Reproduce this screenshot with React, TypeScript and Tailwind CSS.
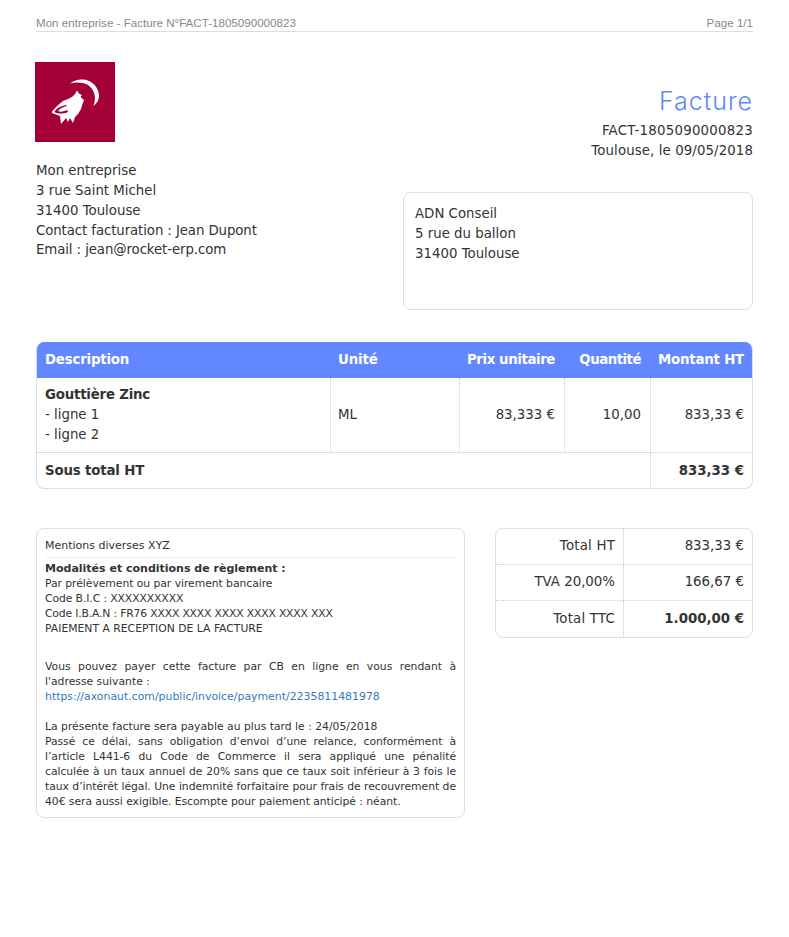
const dejavu = "font-['DejaVu_Sans',sans-serif]";

function Logo() {
  return (
    <div className="w-20 h-20 bg-[#a3003a] -ml-px">
      <svg width="80" height="80" viewBox="0 0 80 80">
        <path d="M35 21.5 C39 18 44 17 49 17.5 C58 19 64 26 64 34 C64 38 62 41 58.5 44 C62 35 59 27 53 23 C47 20 41 20 35 21.5 Z" fill="#fff" />
        <path d="M17 49.5 L22 44 L28 39 L33 37 L37 35 L40 32 L42 28.5 L44.5 32 L47 33 L45.5 35 L49 38 L47.5 42 L46 47 L43 52 L40 55 L38 61 L35 56 L33 60 L31 56 L26 62 L25 54 L17 51 Z" fill="#fff" />
        <path d="M19.5 50 C23 52 28 52 33 50 L32 48 C28 50 25 50 23 49 C25 46.5 28 45 32 44 L31 43 C26 44 21 46.5 19.5 50 Z" fill="#a3003a" />
      </svg>
    </div>
  );
}

const justifiedLine = "whitespace-nowrap [text-align-last:justify]";

export default function App() {
  return (
    <div className={`w-[789px] h-[937px] bg-white px-9 pt-4 text-[#333] text-[13.33px] leading-[19.85px] ${dejavu}`}>
      <div className="flex justify-between h-4 border-b border-[#ddd] font-['Liberation_Sans',sans-serif] text-[11.6px] leading-[14px] text-[#888]">
        <span>Mon entreprise - Facture N°FACT-1805090000823</span>
        <span>Page 1/1</span>
      </div>

      <div className="flex justify-between">
        <div className="pt-[30px]">
          <Logo />
          <div className="mt-[19px]">
            <div>Mon entreprise</div>
            <div>3 rue Saint Michel</div>
            <div>31400 Toulouse</div>
            <div className="tracking-[-0.1px]">Contact facturation : Jean Dupont</div>
            <div className="tracking-[-0.1px]">Email : jean@rocket-erp.com</div>
          </div>
        </div>
        <div className="w-[350px] pt-[53px]">
          <div className="text-right font-['Inter',sans-serif] font-light text-[25px] leading-[32px] tracking-[1px] text-[#6287ff]">Facture</div>
          <div className="text-right mt-[4px]">
            <div className="tracking-[0.25px]">FACT-1805090000823</div>
            <div className="tracking-[0.1px]">Toulouse, le 09/05/2018</div>
          </div>
          <div className="mt-[31px] h-[118px] border border-[#ddd] rounded-[8px] px-[11px] pt-[11px] leading-[20px]">
            <div>ADN Conseil</div>
            <div>5 rue du ballon</div>
            <div>31400 Toulouse</div>
          </div>
        </div>
      </div>

      <div className="mt-[32px] rounded-[8px] border border-[#ddd] border-t-0 overflow-hidden">
        <div className="grid grid-cols-[294px_129px_105px_86px_1fr] h-9 items-center bg-[#6287ff] text-white font-bold -mx-px">
          <div className="pl-[9px] tracking-[-0.2px]">Description</div>
          <div className="pl-2 tracking-[-0.1px]">Unité</div>
          <div className="text-right pr-[9px] tracking-[-0.4px]">Prix unitaire</div>
          <div className="text-right pr-[9px] tracking-[-0.5px]">Quantité</div>
          <div className="text-right pr-[9px] tracking-[-0.2px]">Montant HT</div>
        </div>
        <div className="grid grid-cols-[294px_129px_105px_86px_1fr] h-[74px] items-stretch">
          <div className="pl-2 flex flex-col justify-center border-r border-dotted border-[#ccc]">
            <div className="font-bold tracking-[-0.2px]">Gouttière Zinc</div>
            <div>- ligne 1</div>
            <div>- ligne 2</div>
          </div>
          <div className="pl-[7px] flex items-center border-r border-dotted border-[#ccc]">ML</div>
          <div className="pr-[9px] flex items-center justify-end border-r border-dotted border-[#ccc]">83,333 €</div>
          <div className="pr-[9px] flex items-center justify-end border-r border-dotted border-[#ccc]">10,00</div>
          <div className="pr-2 flex items-center justify-end">833,33 €</div>
        </div>
        <div className="grid grid-cols-[613px_1fr] h-[36px] items-stretch font-bold">
          <div className="pl-2 pt-px flex items-center border-t border-[#ddd] tracking-[-0.15px]">Sous total HT</div>
          <div className="pr-2 pt-px flex items-center justify-end border-t border-l border-dotted border-[#ccc]">833,33 €</div>
        </div>
      </div>

      <div className="mt-[39px] flex justify-between items-start">
        <div className="w-[429px] h-[290px] border border-[#ddd] rounded-[8px] px-2 pt-[9px] text-[10.8px] leading-[15.1px]">
          <div className="pb-[4px] border-b border-[#eee] text-[11px]">Mentions diverses XYZ</div>
          <div className="mt-[3px]">
            <div className="font-bold text-[11px]">Modalités et conditions de règlement :</div>
            <div className="tracking-[-0.05px]">Par prélèvement ou par virement bancaire</div>
            <div className="tracking-[-0.1px]">Code B.I.C : XXXXXXXXXX</div>
            <div className="tracking-[-0.17px]">Code I.B.A.N : FR76 XXXX XXXX XXXX XXXX XXXX XXX</div>
            <div>PAIEMENT A RECEPTION DE LA FACTURE</div>
            <div className={`mt-[23px] ${justifiedLine}`}>Vous pouvez payer cette facture par CB en ligne en vous rendant à</div>
            <div>l'adresse suivante :</div>
            <div className="text-[#337ab7] text-[10.9px]">https://axonaut.com/public/invoice/payment/2235811481978</div>
            <div className="mt-[14px]">La présente facture sera payable au plus tard le : 24/05/2018</div>
            <div className="tracking-[-0.05px]">
              <div className={justifiedLine}>Passé ce délai, sans obligation d’envoi d’une relance, conformément à</div>
              <div className={justifiedLine}>l’article L441-6 du Code de Commerce il sera appliqué une pénalité</div>
              <div className={justifiedLine}>calculée à un taux annuel de 20% sans que ce taux soit inférieur à 3 fois le</div>
              <div className={justifiedLine}>taux d’intérêt légal. Une indemnité forfaitaire pour frais de recouvrement de</div>
              <div>40€ sera aussi exigible. Escompte pour paiement anticipé : néant.</div>
            </div>
          </div>
        </div>

        <div className="w-[258px] h-[110px] border border-[#ddd] rounded-[8px] overflow-hidden">
          <div className="grid grid-cols-[128px_1fr] h-9 items-stretch border-b border-dotted border-[#ccc]">
            <div className="flex items-center justify-end pr-2 border-r border-dotted border-[#ccc] tracking-[0.2px]">Total HT</div>
            <div className="flex items-center justify-end pr-2">833,33 €</div>
          </div>
          <div className="grid grid-cols-[128px_1fr] h-9 items-stretch border-b border-dotted border-[#ccc]">
            <div className="flex items-center justify-end pr-2 border-r border-dotted border-[#ccc]">TVA 20,00%</div>
            <div className="flex items-center justify-end pr-2">166,67 €</div>
          </div>
          <div className="grid grid-cols-[128px_1fr] h-9 items-stretch">
            <div className="flex items-center justify-end pr-2 pt-px border-r border-dotted border-[#ccc] tracking-[0.2px]">Total TTC</div>
            <div className="flex items-center justify-end pr-2 pt-px font-bold">1.000,00 €</div>
          </div>
        </div>
      </div>
    </div>
  );
}
